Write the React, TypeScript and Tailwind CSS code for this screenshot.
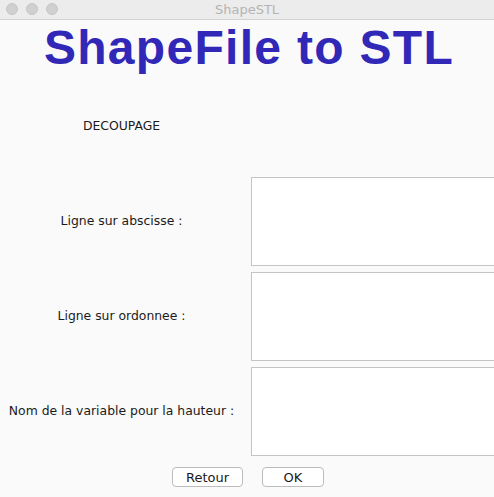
const labelFont = { fontFamily: '"DejaVu Sans", "Liberation Sans", sans-serif' };

const Field = ({ label }: { label: string }) => (
  <div className="grid grid-cols-[251px_1fr] h-[95px] items-center">
    <div className="text-center pr-[8px] text-[12.4px] text-[#1a1a1a]">{label}</div>
    <div className="h-[89px] bg-white border border-[#c4c4c4] -mr-[10px]" />
  </div>
);

export default function App() {
  return (
    <div
      className="w-[494px] h-[497px] overflow-hidden bg-[#fafafa] flex flex-col"
      style={labelFont}
    >
      <div className="h-[20px] shrink-0 bg-[#ececec] border-b border-[#d2d2d2] relative flex items-center justify-center">
        <div className="absolute left-[6px] top-[3px] flex gap-[8px]">
          <span className="w-[12px] h-[12px] rounded-full bg-[#d0d0d0] border border-[#c6c6c6]" />
          <span className="w-[12px] h-[12px] rounded-full bg-[#d0d0d0] border border-[#c6c6c6]" />
          <span className="w-[12px] h-[12px] rounded-full bg-[#d0d0d0] border border-[#c6c6c6]" />
        </div>
        <span className="text-[13px] text-[#b4b4b4]">ShapeSTL</span>
      </div>

      <h1
        className="text-center font-bold text-[48px] leading-[56px] tracking-[1.3px] text-[#3128b8] pl-[4px]"
        style={{ fontFamily: '"Liberation Sans", Arial, sans-serif' }}
      >
        ShapeFile to STL
      </h1>

      <div className="flex flex-col mt-[3px]">
        <div className="grid grid-cols-[251px_1fr] h-[95px] items-center">
          <div className="text-center pr-[8px] text-[12.4px] text-[#1a1a1a]">DECOUPAGE</div>
          <div />
        </div>
        <Field label="Ligne sur abscisse :" />
        <Field label="Ligne sur ordonnee :" />
        <Field label="Nom de la variable pour la hauteur :" />
      </div>

      <div className="flex justify-center gap-[19px] mt-[8px] ml-[2px]">
        <button className="w-[71px] h-[20px] rounded-[4px] bg-white border border-[#bcbcbc] text-[13px] text-[#1a1a1a] leading-none">
          Retour
        </button>
        <button className="w-[62px] h-[20px] rounded-[4px] bg-white border border-[#bcbcbc] text-[13px] text-[#1a1a1a] leading-none">
          OK
        </button>
      </div>
    </div>
  );
}
